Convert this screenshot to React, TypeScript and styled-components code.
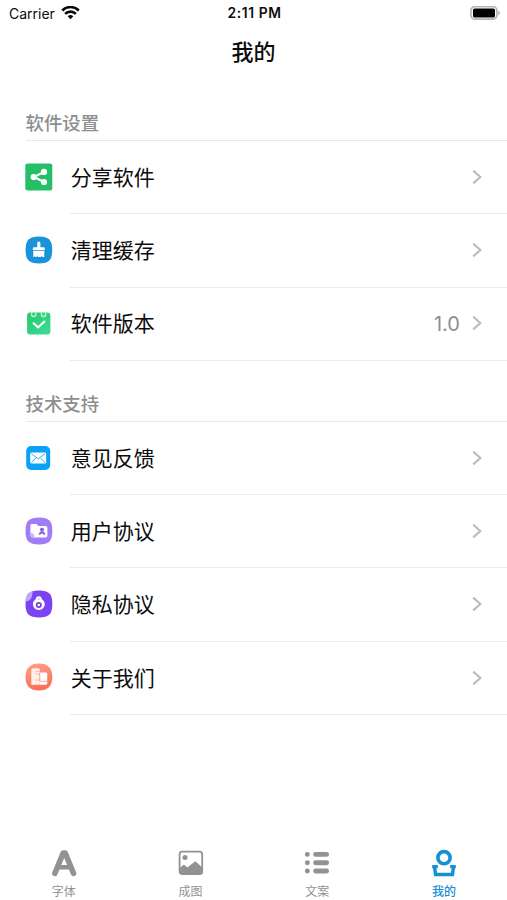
import React from "react";
import styled, { createGlobalStyle } from "styled-components";

const GlobalStyle = createGlobalStyle`
  * { box-sizing: border-box; }
  body {
    margin: 0;
    background: #fff;
    color: #0c0c0c;
    font-family: Inter, "Noto Sans CJK SC", sans-serif;
  }
`;

const Screen = styled.div`
  display: flex;
  flex-direction: column;
  height: 900px;
  overflow: hidden;
  background: #fff;
`;

const StatusBar = styled.div`
  display: grid;
  grid-template-columns: 1fr auto 1fr;
  align-items: center;
  height: 27px;
  padding: 0 7px 0 9px;
  font-size: 14px;
  line-height: 27px;
`;

const Carrier = styled.div`
  display: flex;
  align-items: center;
  gap: 6px;
  svg { margin-bottom: 1px; }
`;

const Clock = styled.div`
  font-size: 13.8px;
  font-weight: 600;
  letter-spacing: 0.6px;
`;

const BatterySlot = styled.div`
  display: flex;
  justify-content: flex-end;
  padding-bottom: 1px;
`;

const Title = styled.h1`
  margin: 0;
  height: 49px;
  font-size: 22px;
  line-height: 50px;
  font-weight: 500;
  text-align: center;
`;

const SectionHead = styled.h2<{ $height: number }>`
  display: flex;
  align-items: flex-end;
  margin: 0 0 0 25.5px;
  height: ${(p) => p.$height}px;
  padding-bottom: 3px;
  border-bottom: 1px solid #e9e9e9;
  color: #8e8e8e;
  font-size: 18.4px;
  line-height: 27px;
  font-weight: 500;
`;

const Row = styled.div`
  display: flex;
  height: 73.3px;
  padding-left: 25px;
`;

const IconSlot = styled.div`
  display: flex;
  align-items: center;
  width: 45px;
  padding-bottom: 2px;
  flex: none;
`;

const RowBody = styled.div`
  display: flex;
  flex: 1;
  align-items: center;
  padding: 0 24px 0 0.7px;
  border-bottom: 1px solid #ebebeb;
  svg { margin-bottom: 0.6px; }
`;

const Label = styled.span`
  flex: 1;
  padding-top: 1.4px;
  font-size: 21px;
  line-height: 30px;
`;

const Value = styled.span`
  margin-right: 11px;
  padding-top: 1.4px;
  color: #8e8e8e;
  font-family: Inter, sans-serif;
  font-size: 20px;
  line-height: 30px;
`;

const TabBar = styled.nav`
  display: grid;
  grid-template-columns: repeat(4, 1fr);
  height: 56px;
  margin-top: auto;
`;

const Tab = styled.div<{ $active?: boolean }>`
  display: flex;
  flex-direction: column;
  align-items: center;
  padding: 4px 0 0 1px;
  color: ${(p) => (p.$active ? "#168fd5" : "#929292")};
  font-size: 12px;
  line-height: 18px;
  font-weight: ${(p) => (p.$active ? 500 : 400)};
  svg { margin-bottom: 4.5px; }
`;

const Wifi = () => (
  <svg width="19" height="14" viewBox="0 0 19 14" fill="none" stroke="#080808" strokeWidth="2.6">
    <path d="M1.2 4.5a11.7 11.7 0 0 1 16.6 0" />
    <path d="M4.1 7.9a7.6 7.6 0 0 1 10.8 0" />
    <path d="M6.7 10.3a4 4 0 0 1 5.6 0L9.5 13.2z" fill="#080808" stroke="none" />
  </svg>
);

const Battery = () => (
  <svg width="30" height="14" viewBox="0 0 30 14">
    <rect x="0.9" y="0.7" width="26" height="12.4" rx="3.8" fill="#fff" stroke="#b5b5b5" strokeWidth="1.7" />
    <rect x="3" y="2.4" width="22" height="9.2" rx="1.6" fill="#000" />
    <path d="M28.3 4.7v4.6c2-.7 2-3.9 0-4.6z" fill="#adadad" />
  </svg>
);

const Chevron = () => (
  <svg width="12" height="16" viewBox="0 0 12 16" fill="none" stroke="#bdbdbd" strokeWidth="2.2">
    <path d="M2.2 1.6 9.3 8l-7.1 6.4" />
  </svg>
);

const Share = () => (
  <svg width="28" height="28" viewBox="0 0 28 28">
    <rect x="0.3" y="0.4" width="27" height="27" rx="2.2" fill="#26bf68" />
    <path d="M19 9 8.8 14 19 19" stroke="#fff" strokeWidth="2" fill="none" />
    <circle cx="8.7" cy="14" r="3.1" fill="#fff" />
    <circle cx="19" cy="8.9" r="3.1" fill="#fff" />
    <circle cx="19" cy="19" r="3.1" fill="#fff" />
  </svg>
);

const Brush = () => (
  <svg width="28" height="28" viewBox="0 0 28 28">
    <path d="M14 .4C24 .4 27.2 4 27.2 14S24 27.4 14 27.4.6 24 .6 14 4 .4 14 .4z" fill="#1994db" />
    <path d="M12.2 7a1.6 1.6 0 0 1 3.2 0v4.2h3.3a1 1 0 0 1 1 1v2H7.9v-2a1 1 0 0 1 1-1h3.3z" fill="#fff" />
    <path d="M8.3 14.9h11v6.2H17v-1.2h-.7v1.2H13v-1.2h-.7v1.2h-2v-1.2h-.7v1.2H8.3z" fill="#fff" />
  </svg>
);

const Calendar = () => (
  <svg width="28" height="28" viewBox="0 0 28 28">
    <defs>
      <linearGradient id="calendarFill" x1="0" y1="0" x2="1" y2="1">
        <stop stopColor="#20c965" /><stop offset="1" stopColor="#42dc9b" />
      </linearGradient>
    </defs>
    <rect x="2.1" y="3.6" width="23.3" height="22" rx="3" fill="url(#calendarFill)" />
    <path d="M6.6 2.5v3a2.1 2.1 0 0 0 4.2 0v-3M16.4 2.5v3a2.1 2.1 0 0 0 4.2 0v-3" fill="none" stroke="#b8f0ce" strokeWidth="1.5" />
    <path d="m8.6 14.3 4.5 4.2 6.3-6" fill="none" stroke="#fff" strokeWidth="2.1" strokeLinecap="round" strokeLinejoin="round" />
  </svg>
);

const Mail = () => (
  <svg width="28" height="28" viewBox="0 0 28 28">
    <rect x="1.2" y="2" width="24" height="24" rx="5" fill="#09a2f6" />
    <rect x="5.2" y="8.6" width="16" height="11" rx="1.4" fill="#fff" />
    <path d="m6.2 9.6 7 5.3 7-5.3M6.5 18.7l4.2-4.5M20 18.7l-4.2-4.5" fill="none" stroke="#36aff2" strokeWidth="1" />
  </svg>
);

const Folder = () => (
  <svg width="28" height="28" viewBox="0 0 28 28">
    <path d="M14 .5C24.2.5 27.3 4 27.3 14S24.2 27.5 14 27.5.5 24 .5 14 4 .5 14 .5z" fill="#a27cf8" />
    <path d="M5.4 8.2a1.3 1.3 0 0 1 1.3-1.3h4.8l2 2h6.9a2 2 0 0 1 2 2v7.8a1.7 1.7 0 0 1-1.7 1.7H7.4a2 2 0 0 1-2-2z" fill="#fff" />
    <path d="M5.4 15.5c2.2.2 4 2 4.3 4.9H7.4a2 2 0 0 1-2-2z" fill="#c6b1fa" />
    <circle cx="17" cy="12.7" r="2" fill="#865fd7" />
    <path d="M13.7 18c.1-2.6 1.2-3.6 3.3-3.6s3.2 1 3.3 3.6l-2.2-.7-1.1-1-1.1 1z" fill="#865fd7" />
  </svg>
);

const Privacy = () => (
  <svg width="28" height="28" viewBox="0 0 28 28">
    <path d="M14 .5C24.2.5 27.3 4 27.3 14S24.2 27.5 14 27.5.5 24 .5 14 4 .5 14 .5z" fill="#7c43f5" />
    <path d="M7.5 1.2C3 2.3.7 5.2.5 11.6 6 10.7 7.7 6.8 7.5 1.2z" fill="#c3a7fb" />
    <path d="M13.8 6.3c1.8 0 3 1.2 3.1 2.9l2.1 2.1a5.9 5.9 0 1 1-10.4 0l2.1-2.1c.1-1.7 1.3-2.9 3.1-2.9z" fill="#fff" />
    <circle cx="13.8" cy="15" r="2.2" fill="#fff" stroke="#7442dc" strokeWidth="1.7" />
    <circle cx="13.8" cy="9" r=".7" fill="#a57cf2" />
  </svg>
);

const About = () => (
  <svg width="28" height="28" viewBox="0 0 28 28">
    <defs>
      <linearGradient id="aboutFill" x1="0" y1="0" x2=".2" y2="1">
        <stop stopColor="#ffa08a" /><stop offset="1" stopColor="#fa7258" />
      </linearGradient>
    </defs>
    <path d="M14 .4C22.9.4 27.3 5 27.3 14S22.9 27.5 14 27.5.5 23 .5 14 5.1.4 14 .4z" fill="url(#aboutFill)" />
    <path d="M6.3 7.3a2 2 0 0 1 2-2h4.6a2 2 0 0 1 2 2v14.5H6.3z" fill="#fff0ec" />
    <path d="M10.5 8.5h4.4M10.5 11h4.4M10.5 17h4.4" stroke="#ffb4a5" strokeWidth=".9" />
    <path d="M15 9.6h5.9a1.3 1.3 0 0 1 1.3 1.3v9.3a1.6 1.6 0 0 1-1.6 1.6H15z" fill="#fff" />
    <path d="M14.8 9.5v8.8h7.5" fill="none" stroke="#ff947d" strokeWidth=".8" />
  </svg>
);

const FontIcon = () => (
  <svg width="28" height="30" viewBox="0 0 28 30" fill="none" stroke="currentColor" strokeLinecap="round" strokeLinejoin="round">
    <path d="M4.9 25.3 13.2 5h2L23.5 25.3" strokeWidth="5.6" />
    <path d="M9 19.2h10" strokeWidth="4.6" />
  </svg>
);

const PictureIcon = () => (
  <svg width="28" height="30" viewBox="0 0 28 30">
    <rect x="2.6" y="3.6" width="22.6" height="22.6" rx="2.6" fill="#fff" stroke="currentColor" strokeWidth="1.8" />
    <circle cx="8" cy="9.4" r="2.5" fill="currentColor" />
    <path d="M2.6 20.1 6.9 16.6l3.4 2.8 8.1-6.2 6.8 6.3v4.6q0 2-2 2H4.6q-2 0-2-2z" fill="currentColor" />
  </svg>
);

const ListIcon = () => (
  <svg width="28" height="30" viewBox="0 0 28 30" fill="none" stroke="currentColor" strokeWidth="4.9" strokeLinecap="round">
    <path d="M4.3 6.4h.1M4.3 14.7h.1M4.3 23h.1" />
    <path d="M12.6 6.4h11M12.6 14.7h11M12.6 23h11" />
  </svg>
);

const ProfileIcon = () => (
  <svg width="28" height="30" viewBox="0 0 28 30" fill="none" stroke="currentColor">
    <circle cx="14" cy="9.7" r="6.1" strokeWidth="3.6" />
    <path d="M2.2 18.6H7.8M20.2 18.6h5.6M4.5 18.6l1 7.9h17l1-7.9" strokeWidth="3.4" />
  </svg>
);

type Item = { label: string; icon: React.ReactNode; value?: string };

const settings: Item[] = [
  { label: "分享软件", icon: <Share /> },
  { label: "清理缓存", icon: <Brush /> },
  { label: "软件版本", icon: <Calendar />, value: "1.0" },
];

const support: Item[] = [
  { label: "意见反馈", icon: <Mail /> },
  { label: "用户协议", icon: <Folder /> },
  { label: "隐私协议", icon: <Privacy /> },
  { label: "关于我们", icon: <About /> },
];

const SettingsList = ({ items }: { items: Item[] }) => (
  <div>
    {items.map((item) => (
      <Row key={item.label}>
        <IconSlot>{item.icon}</IconSlot>
        <RowBody>
          <Label>{item.label}</Label>
          {item.value && <Value>{item.value}</Value>}
          <Chevron />
        </RowBody>
      </Row>
    ))}
  </div>
);

export default function App() {
  return (
    <>
      <GlobalStyle />
      <Screen>
        <StatusBar>
          <Carrier>Carrier <Wifi /></Carrier>
          <Clock>2:11 PM</Clock>
          <BatterySlot><Battery /></BatterySlot>
        </StatusBar>
        <Title>我的</Title>
        <SectionHead $height={65}>软件设置</SectionHead>
        <SettingsList items={settings} />
        <SectionHead $height={61}>技术支持</SectionHead>
        <SettingsList items={support} />
        <TabBar>
          <Tab><FontIcon />字体</Tab>
          <Tab><PictureIcon />成图</Tab>
          <Tab><ListIcon />文案</Tab>
          <Tab $active><ProfileIcon />我的</Tab>
        </TabBar>
      </Screen>
    </>
  );
}
